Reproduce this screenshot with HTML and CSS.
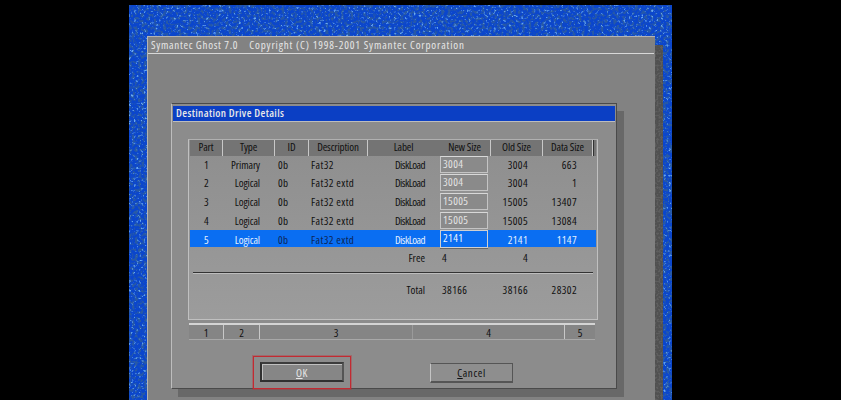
FILE: index.html
```html
<!DOCTYPE html>
<html lang="en">
<head>
<meta charset="utf-8">
<title>Symantec Ghost</title>
<link rel="stylesheet" href="styles.css">
</head>
<body>
<div class="desktop">
  <svg class="texture" aria-hidden="true">
    <filter id="grain" x="0" y="0" width="100%" height="100%">
      <feTurbulence type="fractalNoise" baseFrequency="0.32" numOctaves="3" seed="4"/>
      <feColorMatrix type="matrix" values="0 0 0 0 0.02  0 0 0 0 0.1  0 0 0 0 0.38  6 0 0 0 -2.9"/>
    </filter>
    <filter id="grain3" x="0" y="0" width="100%" height="100%">
      <feTurbulence type="fractalNoise" baseFrequency="0.4" numOctaves="2" seed="21"/>
      <feColorMatrix type="matrix" values="0 0 0 0 0.14  0 0 0 0 0.4  0 0 0 0 0.88  5 0 0 0 -3"/>
    </filter>
    <rect class="grain-rect" width="100%" height="100%" filter="url(#grain)"/>
    <rect class="grain-rect" width="100%" height="100%" filter="url(#grain3)"/>
  </svg>
  <main class="ghost">
    <svg class="ghost-shadow" aria-hidden="true">
      <filter id="grain2" x="0" y="0" width="100%" height="100%">
        <feTurbulence type="fractalNoise" baseFrequency="0.5" numOctaves="3" seed="9"/>
        <feColorMatrix type="matrix" values="0 0 0 0 0.08  0 0 0 0 0.08  0 0 0 0 0.08  8 0 0 0 -3.2"/>
      </filter>
      <rect class="shadow-rect" width="100%" height="100%" filter="url(#grain2)"/>
    </svg>
    <header class="ghost-title"><span class="product">Symantec Ghost 7.0</span><span>Copyright (C) 1998-2001 Symantec Corporation</span></header>
    <section class="dialog">
      <h1 class="dialog-title">Destination Drive Details</h1>
      <div class="table">
        <div class="row head">
          <div class="h part">Part</div><div class="h type">Type</div><div class="h id">ID</div><div class="h desc">Description</div><div class="h-wide"><span class="label-head">Label</span><span class="new-head">New Size</span></div><div class="h old">Old Size</div><div class="h data">Data Size</div><div class="h tail"></div>
        </div>
        <div class="row item">
          <div class="c-part">1</div><div class="c-type">Primary</div><div class="c-id">0b</div><div class="c-desc">Fat32</div><div class="c-label">DiskLoad</div><div class="c-new"><span class="input">3004</span></div><div class="c-old">3004</div><div class="c-data">663</div>
        </div>
        <div class="row item">
          <div class="c-part">2</div><div class="c-type">Logical</div><div class="c-id">0b</div><div class="c-desc">Fat32 extd</div><div class="c-label">DiskLoad</div><div class="c-new"><span class="input">3004</span></div><div class="c-old">3004</div><div class="c-data">1</div>
        </div>
        <div class="row item">
          <div class="c-part">3</div><div class="c-type">Logical</div><div class="c-id">0b</div><div class="c-desc">Fat32 extd</div><div class="c-label">DiskLoad</div><div class="c-new"><span class="input">15005</span></div><div class="c-old">15005</div><div class="c-data">13407</div>
        </div>
        <div class="row item">
          <div class="c-part">4</div><div class="c-type">Logical</div><div class="c-id">0b</div><div class="c-desc">Fat32 extd</div><div class="c-label">DiskLoad</div><div class="c-new"><span class="input">15005</span></div><div class="c-old">15005</div><div class="c-data">13084</div>
        </div>
        <div class="row item selected">
          <div class="c-part">5</div><div class="c-type">Logical</div><div class="c-id">0b</div><div class="c-desc">Fat32 extd</div><div class="c-label">DiskLoad</div><div class="c-new"><span class="input">2141</span></div><div class="c-old">2141</div><div class="c-data">1147</div>
        </div>
        <div class="row item free">
          <div class="c-sum">Free</div><div class="c-new plain">4</div><div class="c-old">4</div><div class="c-data"></div>
        </div>
        <div class="rule"></div>
        <div class="row item total">
          <div class="c-sum">Total</div><div class="c-new plain">38166</div><div class="c-old">38166</div><div class="c-data">28302</div>
        </div>
      </div>
      <div class="strip">
        <div class="seg s1">1</div><div class="seg s2">2</div><div class="seg s3">3</div><div class="seg s4">4</div><div class="seg s5">5</div>
      </div>
      <div class="actions">
        <div class="focus-box"><button class="btn" type="button"><u>O</u>K</button></div>
        <button class="btn cancel" type="button"><u>C</u>ancel</button>
      </div>
    </section>
  </main>
</div>
</body>
</html>
```
FILE: styles.css
```css
* { box-sizing: border-box; }
html, body { margin: 0; height: 400px; overflow: hidden; background: #000; }
body {
  font-family: "Open Sans", "Noto Sans", "Liberation Sans", sans-serif;
  font-stretch: 75%;
  font-size: 11px;
  color: #101010;
}
.desktop {
  position: relative;
  width: 543px;
  height: 395px;
  margin: 5px 0 0 129px;
  padding: 31px 0 0 18px;
  background: #0b46cc;
  overflow: hidden;
}
.texture { position: absolute; inset: 0; width: 100%; height: 100%; }
.grain-rect { fill: #000; }
.ghost {
  position: relative;
  width: 508px;
  height: 400px;
  padding-top: 1px;
  background: #828282;
  border-top: 1px solid #b4b4b4;
  border-left: 1px solid #b4b4b4;
}
.ghost-shadow {
  position: absolute;
  left: 507px;
  top: 8px;
  width: 8px;
  height: 400px;
  background: #5e5e5e;
}
.shadow-rect { fill: #000; }
.ghost-title {
  display: flex;
  gap: 11px;
  height: 16px;
  line-height: 14px;
  padding-left: 3px;
  border-bottom: 1px solid #d8d8d8;
  margin-right: 1px;
  color: #e6e6e6;
  font-size: 11px;
  letter-spacing: 0.85px;
  white-space: nowrap;
}
.product { letter-spacing: 0.7px; }
.dialog {
  width: 446px;
  height: 286px;
  margin: 49px 0 0 23px;
  padding: 2px 1px 0 1px;
  background: #8c8c8c;
  border: 1px solid #4a4a4a;
  border-left-color: #bdbdbd;
  box-shadow: 7px 8px 0 #686868;
}
.dialog-title {
  margin: 0;
  height: 15px;
  padding-left: 3px;
  background: #0b3fc4;
  box-shadow: 0 1px 0 #bdbdbd;
  color: #e8e8e8;
  font: inherit;
  font-size: 11px;
  font-weight: 600;
  line-height: 14px;
  letter-spacing: 0.38px;
}
.table {
  width: 410px;
  height: 181px;
  margin: 18px 0 0 15px;
  padding: 0 1px;
  border: 1px solid #c0c0c0;
  border-top-color: #b0b0b0;
  background: linear-gradient(#8e8e8e, #9c9c9c);
}
.row {
  display: grid;
  grid-template-columns: 33px 52px 34px 59px 71px 52px 52px 50px 5px;
  align-items: center;
  white-space: nowrap;
}
.head {
  height: 16px;
  margin-bottom: -1px;
  grid-template-columns: 33px 52px 34px 59px 123px 52px 50px 5px;
  background: #747474;
}
.h, .h-wide {
  height: 16px;
  line-height: 14px;
  text-align: center;
  border-right: 1px solid #c8c8c8;
  letter-spacing: -0.15px;
}
.h-wide { display: flex; }
.label-head { width: 71px; }
.new-head { width: 51px; }
.h.tail { border-right: 0; border-left: 1px solid #333; }
.item { height: 18.6px; line-height: 15px; letter-spacing: 0.4px; }
.selected { background: #0a6ef2; height: 17px; margin: 1px 0 0.6px; color: #e4f0ff; }
.selected .c-id, .selected .c-desc { color: #0d2555; }
.c-part { text-align: center; }
.c-type { text-align: right; padding-right: 15px; letter-spacing: -0.1px; }
.c-id { padding-left: 3px; }
.c-desc { padding-left: 2px; }
.c-label { padding-left: 27px; letter-spacing: -0.55px; }
.c-new { padding-left: 1px; }
.c-old { text-align: right; padding-right: 15px; }
.c-data { text-align: right; padding-right: 16px; }
.input {
  display: block;
  width: 48px;
  height: 17px;
  line-height: 14px;
  padding-left: 2px;
  border: 1px solid #c4c4c4;
  border-top-color: #d8d8d8;
  background: #8a8a8a;
  color: #e4e4e4;
}
.selected .input { background: #0a6ef2; height: 18px; border-color: #d0d0d0; box-shadow: 0 1px 0 #666; color: #f0f6ff; }
.free, .total { grid-template-columns: 235px 66px 52px 50px; }
.c-sum { text-align: right; letter-spacing: 0; }
.free .c-new, .total .c-new { padding-left: 17px; }
.rule {
  height: 2px;
  margin: 5px 3px 0 3px;
  background: #333;
  border-bottom: 1px solid #bdbdbd;
}
.total { margin-top: 7px; }
.strip {
  display: flex;
  width: 406px;
  height: 17px;
  margin: 3px 0 0 16px;
  border-top: 2px solid #d4d4d4;
  border-bottom: 1px solid #a8a8a8;
  background: #858585;
  line-height: 15px;
  text-align: center;
}
.seg { border-right: 1px solid #c8c8c8; }
.s1 { width: 35px; }
.s2 { width: 36px; }
.s3 { width: 153px; border-right-color: #9a9a9a; }
.s4 { width: 152px; }
.s5 { width: 30px; border-right: 0; }
.actions {
  display: flex;
  align-items: center;
  margin: 16px 0 0 80px;
  gap: 79px;
}
.focus-box {
  padding: 5px 6px 6px;
  border: 1px solid #c22a32;
  outline: 1px solid rgba(194, 42, 50, 0.35);
}
.btn {
  display: block;
  width: 84px;
  height: 20px;
  padding: 0;
  font: inherit;
  letter-spacing: 0.6px;
  background: #868686;
  color: #e8e8e8;
  border: 2px solid #303030;
  border-top-color: #3c3c3c;
  border-right-color: #555;
  box-shadow: inset 1px 1px 0 #c0c0c0;
}
.btn.cancel {
  width: 83px;
  color: #101010;
  background: #8e8e8e;
  border: 1px solid #555;
  border-left-color: #c4c4c4;
  border-bottom: 2px solid #555;
  box-shadow: none;
}
```
